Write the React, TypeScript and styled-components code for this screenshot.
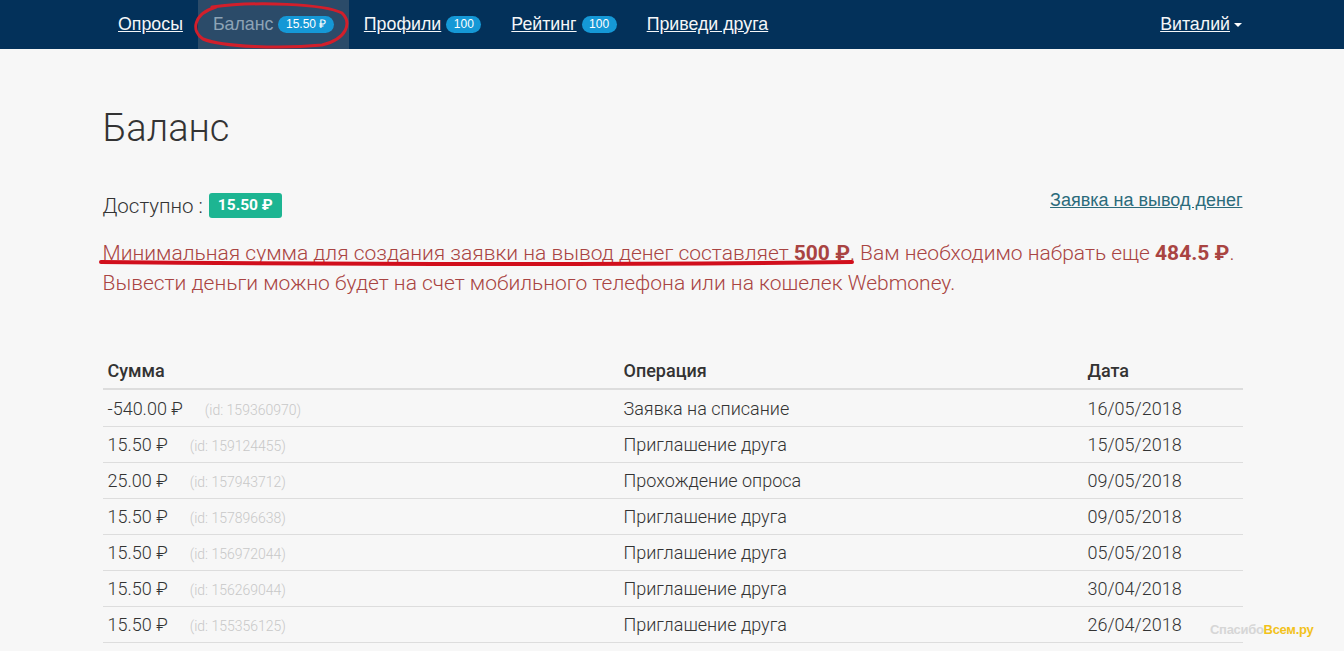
import React from "react";
import styled, { createGlobalStyle } from "styled-components";

const GlobalStyle = createGlobalStyle`
  html, body { margin: 0; padding: 0; }
  body {
    background: #f7f7f7;
    font-family: Roboto, "Noto Sans", sans-serif;
    font-weight: 300;
    color: #333;
    overflow: hidden;
  }
`;

const Page = styled.div`
  position: relative;
  width: 1344px;
  height: 651px;
  overflow: hidden;
`;

const NavBar = styled.nav`
  height: 49px;
  background: #03315a;
`;

const NavInner = styled.div`
  width: 1140px;
  margin: 0 auto;
  height: 100%;
  display: flex;
  justify-content: space-between;
  align-items: stretch;
`;

const NavList = styled.ul`
  list-style: none;
  margin: 0;
  padding: 0 0 0 1px;
  display: flex;
  align-items: stretch;
`;

const NavItem = styled.li<{ $active?: boolean }>`
  display: flex;
  align-items: center;
  gap: 5px;
  padding: 0 15px;
  background: ${(p) => (p.$active ? "#2b4b69" : "transparent")};
  font-family: "Liberation Sans", Arial, sans-serif;
  font-weight: 400;
  font-size: 17.8px;
  a {
    color: ${(p) => (p.$active ? "#8da3b6" : "#f4f6f8")};
    text-decoration: ${(p) => (p.$active ? "none" : "underline")};
  }
`;

const UserItem = styled(NavItem)`
  padding: 0;
  gap: 4px;
`;

const NavBadge = styled.span`
  display: inline-block;
  background: #1598d6;
  color: #fff;
  font-family: "Liberation Sans", Arial, sans-serif;
  font-size: 12px;
  line-height: 17px;
  padding: 0 7.5px;
  border-radius: 9px;
`;

const Caret = styled.span`
  display: inline-block;
  width: 0;
  height: 0;
  border-left: 4px solid transparent;
  border-right: 4px solid transparent;
  border-top: 4px solid #fff;
  margin-top: 1px;
`;

const Container = styled.main`
  width: 1140px;
  margin: 0 auto;
  padding: 56px 0 0 1px;
`;

const Title = styled.h1`
  margin: 0;
  font-size: 38px;
  font-weight: 300;
  line-height: 46px;
  color: #333;
`;

const BalanceRow = styled.div`
  display: flex;
  justify-content: space-between;
  align-items: center;
  margin-top: 42px;
`;

const Available = styled.div`
  display: flex;
  align-items: center;
  gap: 6px;
  font-size: 20.5px;
  color: #333;
`;

const GreenLabel = styled.span`
  display: inline-block;
  background: #1db592;
  color: #fff;
  font-weight: 700;
  font-size: 15.5px;
  line-height: 25px;
  padding: 0 9px;
  border-radius: 3px;
`;

const WithdrawLink = styled.a`
  font-family: "Liberation Sans", Arial, sans-serif;
  font-weight: 400;
  font-size: 18px;
  color: #2b6b7b;
  text-decoration: underline;
  margin-top: -10px;
`;

const Warning = styled.p`
  margin: 20px 0 0;
  color: #a94442;
  font-size: 21px;
  line-height: 30px;
  strong { font-weight: 700; }
`;

const Table = styled.table`
  width: 100%;
  border-collapse: collapse;
  margin-top: 55px;
  font-size: 18px;
  color: #333;
  th {
    text-align: left;
    font-weight: 500;
    padding: 5px;
    line-height: 25px;
    border-bottom: 2px solid #dddddd;
    color: #333;
  }
  td {
    padding: 5px;
    line-height: 25px;
    height: 25px;
    border-bottom: 1px solid #dddddd;
    vertical-align: middle;
  }
  tbody tr:first-child td { padding-top: 6px; }
`;

const IdNote = styled.span`
  color: #c8c8c8;
  font-size: 14px;
  line-height: 1;
  margin-left: 22px;
`;

const Overlay = styled.svg`
  position: absolute;
  left: 0;
  top: 0;
  pointer-events: none;
`;

const Watermark = styled.div`
  position: absolute;
  left: 1210px;
  top: 622px;
  font-family: "Liberation Sans", Arial, sans-serif;
  font-weight: 700;
  font-size: 13px;
  letter-spacing: -0.3px;
  color: #d6d6d6;
  span { color: #f2c21b; }
`;

const rows = [
  { sum: "-540.00 ₽", id: "159360970", op: "Заявка на списание", date: "16/05/2018" },
  { sum: "15.50 ₽", id: "159124455", op: "Приглашение друга", date: "15/05/2018" },
  { sum: "25.00 ₽", id: "157943712", op: "Прохождение опроса", date: "09/05/2018" },
  { sum: "15.50 ₽", id: "157896638", op: "Приглашение друга", date: "09/05/2018" },
  { sum: "15.50 ₽", id: "156972044", op: "Приглашение друга", date: "05/05/2018" },
  { sum: "15.50 ₽", id: "156269044", op: "Приглашение друга", date: "30/04/2018" },
  { sum: "15.50 ₽", id: "155356125", op: "Приглашение друга", date: "26/04/2018" },
];

export default function App() {
  return (
    <Page>
      <GlobalStyle />
      <NavBar>
        <NavInner>
          <NavList>
            <NavItem><a>Опросы</a></NavItem>
            <NavItem $active><a>Баланс</a><NavBadge>15.50 ₽</NavBadge></NavItem>
            <NavItem><a>Профили</a><NavBadge>100</NavBadge></NavItem>
            <NavItem><a>Рейтинг</a><NavBadge>100</NavBadge></NavItem>
            <NavItem><a>Приведи друга</a></NavItem>
          </NavList>
          <NavList>
            <UserItem><a>Виталий </a><Caret /></UserItem>
          </NavList>
        </NavInner>
      </NavBar>
      <Container>
        <Title>Баланс</Title>
        <BalanceRow>
          <Available>
            Доступно : <GreenLabel>15.50 ₽</GreenLabel>
          </Available>
          <WithdrawLink>Заявка на вывод денег</WithdrawLink>
        </BalanceRow>
        <Warning>
          Минимальная сумма для создания заявки на вывод денег составляет <strong>500 ₽</strong>. Вам необходимо набрать еще <strong>484.5 ₽</strong>.
          <br />
          Вывести деньги можно будет на счет мобильного телефона или на кошелек Webmoney.
        </Warning>
        <Table>
          <colgroup>
            <col style={{ width: 516 }} />
            <col style={{ width: 464 }} />
            <col style={{ width: 160 }} />
          </colgroup>
          <thead>
            <tr>
              <th>Сумма</th>
              <th>Операция</th>
              <th>Дата</th>
            </tr>
          </thead>
          <tbody>
            {rows.map((r, i) => (
              <tr key={i}>
                <td>
                  {r.sum}
                  <IdNote>(id: {r.id})</IdNote>
                </td>
                <td>{r.op}</td>
                <td>{r.date}</td>
              </tr>
            ))}
          </tbody>
        </Table>
      </Container>
      <Overlay width="1344" height="651" viewBox="0 0 1344 651">
        <path
          d="M212 7 C 255 1, 325 4, 342 13 C 352 23, 347 39, 322 45 C 282 49, 222 47, 203 39 C 191 31, 193 14, 216 7"
          fill="none"
          stroke="#d21f2b"
          strokeWidth="3"
          strokeLinecap="round"
        />
        <path
          d="M101 262 C 300 264, 600 265, 852 262"
          fill="none"
          stroke="#d10f1c"
          strokeWidth="4"
          strokeLinecap="round"
        />
      </Overlay>
      <Watermark>Спасибо<span>Всем.ру</span></Watermark>
    </Page>
  );
}
